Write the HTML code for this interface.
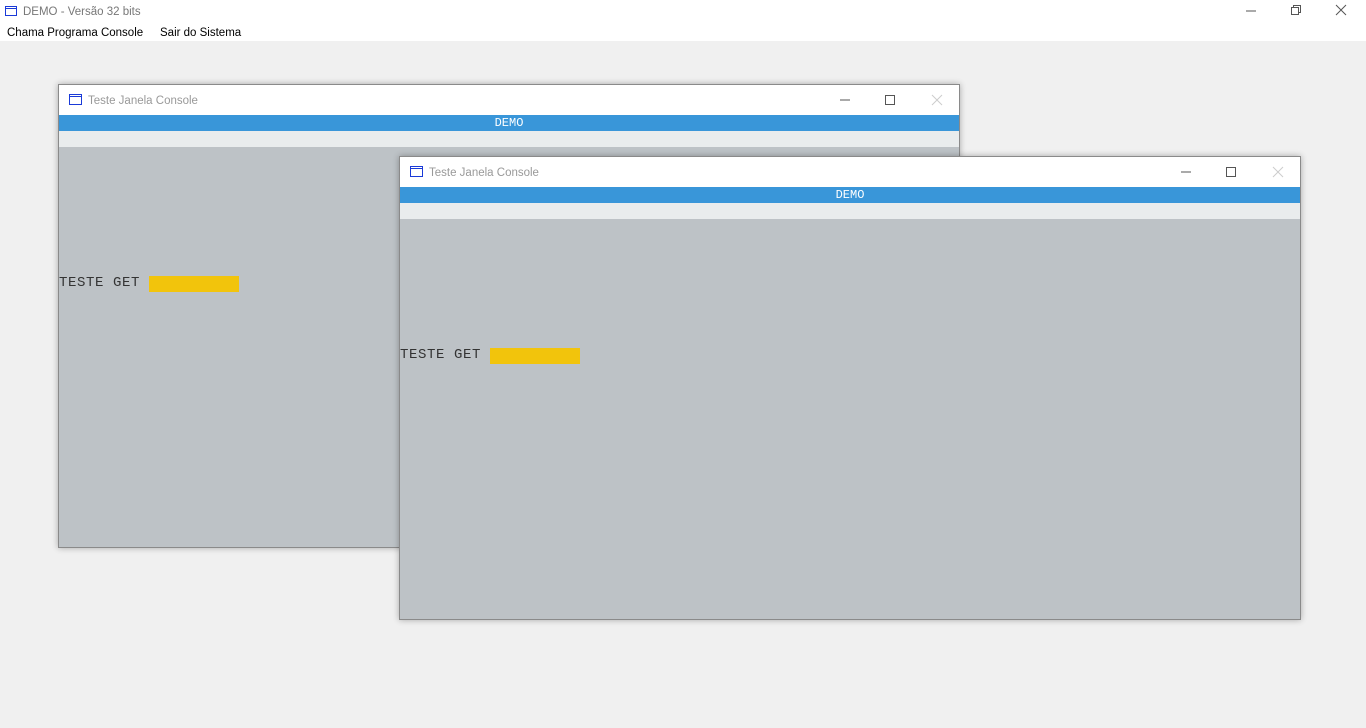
<!DOCTYPE html>
<html><head><style>
*{margin:0;padding:0;box-sizing:border-box}
body{width:1366px;height:728px;background:#f0f0f0;font-family:"Segoe UI","Liberation Sans",sans-serif;position:relative;overflow:hidden}
.top{position:absolute;left:0;top:0;width:1366px;height:22px;background:#fff}
.menu{position:absolute;left:0;top:22px;width:1366px;height:19px;background:#fff;font-size:11.5px;color:#000}
.win{position:absolute;width:902px;height:464px;background:#bdc2c6;border:1px solid #8a8a8a;box-shadow:0 0 6px rgba(0,0,0,.3)}
.tb{position:absolute;left:0;top:0;width:100%;height:30px;background:#fff;font-size:11.5px;color:#999}
.blue{position:absolute;left:0;top:30px;width:100%;height:16px;background:#3996d9;color:#fff;font-family:"Courier New","Liberation Mono",monospace;font-size:12px;text-align:center;line-height:16px}
.lt{position:absolute;left:0;top:46px;width:100%;height:16px;background:#e9eced}
.get{position:absolute;left:0;font-family:"Courier New","Liberation Mono",monospace;font-size:14px;letter-spacing:0.6px;color:#333}
.yl{position:absolute;left:90px;top:1px;width:90px;height:16px;background:#f2c40c}
</style></head><body>
<div class="top">
<svg style="position:absolute;left:5px;top:6px" width="12" height="10"><rect x="0.5" y="0.5" width="11" height="9" fill="none" stroke="#1a3ad8"/><line x1="0" y1="2.5" x2="12" y2="2.5" stroke="#1a3ad8"/></svg>
<span style="position:absolute;left:23px;top:6px;font-size:11.5px;color:#777">DEMO - Versão 32 bits</span>
<svg style="position:absolute;left:1240px;top:4px" width="120" height="14" stroke="#555" fill="none"><line x1="6" y1="7" x2="16" y2="7"/><rect x="51.5" y="3.5" width="7" height="7"/><path d="M53.5 3.5V1.5H60.5V8.5H58.5"/><path d="M96 1L106 11M106 1L96 11"/></svg>
</div>
<div class="menu"><span style="position:absolute;left:7px;top:5px">Chama Programa Console</span><span style="position:absolute;left:160px;top:5px">Sair do Sistema</span></div>

<div class="win" style="left:58px;top:84px">
<div class="tb"><svg style="position:absolute;left:10px;top:9px" width="13" height="11"><rect x="0.5" y="0.5" width="12" height="10" fill="none" stroke="#1a3ad8"/><line x1="0" y1="2.5" x2="13" y2="2.5" stroke="#1a3ad8"/></svg><span style="position:absolute;left:29px;top:10px">Teste Janela Console</span>
<svg style="position:absolute;left:780px;top:9px" width="110" height="12" stroke="#555" fill="none"><line x1="1" y1="6" x2="11" y2="6"/><rect x="46.5" y="1.5" width="9" height="9"/><path d="M93 1L103 11M103 1L93 11" stroke="#ccc"/></svg></div>
<div class="blue">DEMO</div><div class="lt"></div>
<div class="get" style="top:190px">TESTE GET<div class="yl"></div></div>
</div>

<div class="win" style="left:399px;top:156px">
<div class="tb"><svg style="position:absolute;left:10px;top:9px" width="13" height="11"><rect x="0.5" y="0.5" width="12" height="10" fill="none" stroke="#1a3ad8"/><line x1="0" y1="2.5" x2="13" y2="2.5" stroke="#1a3ad8"/></svg><span style="position:absolute;left:29px;top:10px">Teste Janela Console</span>
<svg style="position:absolute;left:780px;top:9px" width="110" height="12" stroke="#555" fill="none"><line x1="1" y1="6" x2="11" y2="6"/><rect x="46.5" y="1.5" width="9" height="9"/><path d="M93 1L103 11M103 1L93 11" stroke="#ccc"/></svg></div>
<div class="blue">DEMO</div><div class="lt"></div>
<div class="get" style="top:190px">TESTE GET<div class="yl"></div></div>
</div>
</body></html>
